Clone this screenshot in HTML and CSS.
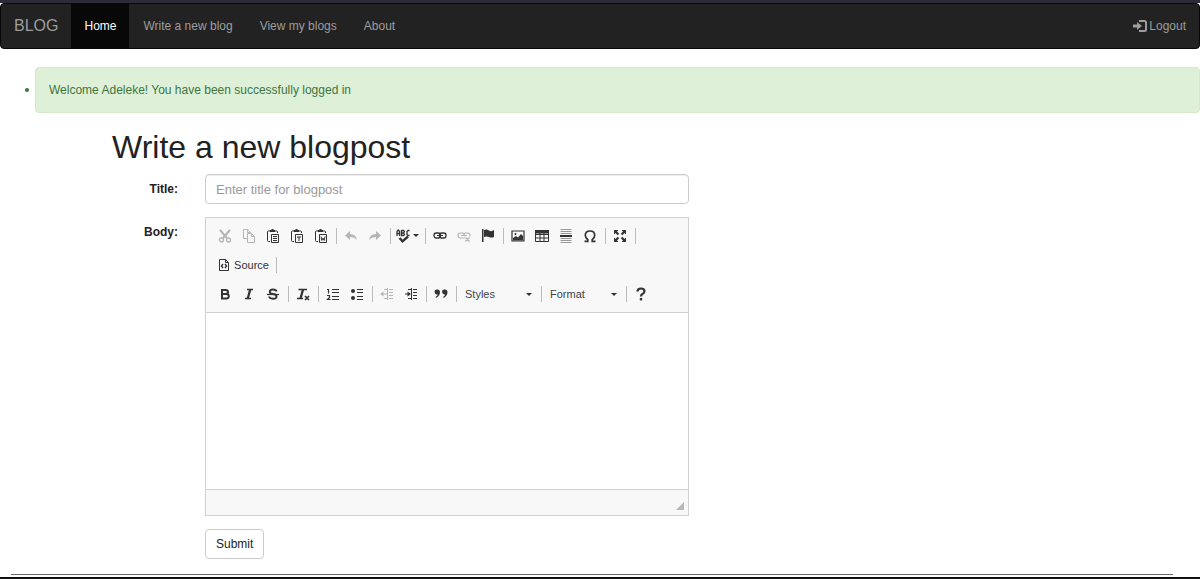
FILE: index.html
```html
<!DOCTYPE html>
<html lang="en">

<head>
  <meta charset="utf-8">
  <meta name="viewport" content="width=device-width, initial-scale=1">
  <title>Blog</title>
  <link rel="stylesheet" href="styles.css">
</head>

<body>
	<nav class="navbar">
		<a class="brand" href="#">BLOG</a>
		<ul class="nav">
			<li><a class="active" href="#">Home</a></li>
			<li><a href="#">Write a new blog</a></li>
			<li><a href="#">View my blogs</a></li>
			<li><a href="#">About</a></li>
		</ul>
		<a class="logout" href="#">
			<svg width="14" height="12" viewBox="0 0 14 12"><path d="M6 1h5.500q1.500 0 1.500 1.500v7q0 1.500-1.500 1.500H6" fill="none" stroke="currentColor" stroke-width="2"/><path d="M0 4.500h4V2l5 4-5 4V7.500H0z" fill="currentColor"/></svg>
			Logout
		</a>
	</nav>

	<ul class="messages">
		<li><div class="alert">Welcome Adeleke! You have been successfully logged in</div></li>
	</ul>

	<main class="container">
		<h1>Write a new blogpost</h1>
		<form class="post-form">
			<label for="title">Title:</label>
			<input type="text" id="title" class="form-control" placeholder="Enter title for blogpost">

			<label for="body">Body:</label>
			<div class="editor">
				<div class="toolbar">
					<div class="row">
						<button type="button" class="tool off" aria-label="Cut"><svg viewBox="0 0 14 14"><path d="M2 1l7 8M12 1L5 9" fill="none" stroke="currentColor" stroke-width="2"/><circle cx="3.500" cy="11" r="2" fill="none" stroke="currentColor" stroke-width="1.300"/><circle cx="10.500" cy="11" r="2" fill="none" stroke="currentColor" stroke-width="1.300"/></svg></button>
						<button type="button" class="tool off" aria-label="Copy"><svg viewBox="0 0 14 14"><path d="M5 9.500H1.500v-9h4l3 3V4M5.500.5v3h3M5.500 4.500h4l3 3v6h-7zM9.500 4.500v3h3" fill="none" stroke="currentColor"/></svg></button>
						<button type="button" class="tool" aria-label="Paste"><svg viewBox="0 0 14 14"><path d="M4 2H2.500Q1.500 2 1.500 3v8.500q0 1 1 1H4M9 2h1.500q1 0 1 1v1" fill="none" stroke="currentColor"/><path d="M4 1h1.500V0h2v1H9v2H4z" fill="currentColor"/><path d="M5.500 5.500h7v8h-7zM7 7.500h4M7 9.500h4M7 11.500h4" fill="none" stroke="currentColor"/></svg></button>
						<button type="button" class="tool" aria-label="Paste as plain text"><svg viewBox="0 0 14 14"><path d="M4 2H2.500Q1.500 2 1.500 3v8.500q0 1 1 1H4M9 2h1.500q1 0 1 1v1" fill="none" stroke="currentColor"/><path d="M4 1h1.500V0h2v1H9v2H4z" fill="currentColor"/><path d="M5.500 5.500h7v8h-7zM7 8h4M9 8v4" fill="none" stroke="currentColor"/></svg></button>
						<button type="button" class="tool" aria-label="Paste from Word"><svg viewBox="0 0 14 14"><path d="M4 2H2.500Q1.500 2 1.500 3v8.500q0 1 1 1H4M9 2h1.500q1 0 1 1v1" fill="none" stroke="currentColor"/><path d="M4 1h1.500V0h2v1H9v2H4z" fill="currentColor"/><path d="M5.500 5.500h7v8h-7zM7 7.500l.8 4L9 9l1.200 2.500.8-4" fill="none" stroke="currentColor"/></svg></button>
						<span class="sep"></span>
						<button type="button" class="tool off" aria-label="Undo"><svg viewBox="0 0 14 14"><path d="M6 2v3q6 0 7 6-2.500-3-7-3v3L1 6.500z" fill="currentColor"/></svg></button>
						<button type="button" class="tool off" aria-label="Redo"><svg viewBox="0 0 14 14"><path d="M8 2v3q-6 0-7 6 2.500-3 7-3v3l5-4.500z" fill="currentColor"/></svg></button>
						<span class="sep"></span>
						<button type="button" class="tool spell" aria-label="Spell check"><svg viewBox="0 0 14 14"><path d="M1 7V2.500L2.300 1l1.300 1.500V7M1 4.500h2.500M5.500 1v5.500h2l1-1-1-1.500 1-1.500-1-1h-2M5.500 4h2M13.500 1.500h-1.500L11 2.500v3l1 1h1.500" fill="none" stroke="currentColor" stroke-width="1.300"/><path d="M3.500 9l3 3.300L12 7.500" fill="none" stroke="currentColor" stroke-width="2.400"/></svg><span class="caret"></span></button>
						<span class="sep"></span>
						<button type="button" class="tool" aria-label="Link"><svg viewBox="0 0 14 14"><rect x="1" y="4" width="6.500" height="5" rx="2.200" fill="none" stroke="currentColor" stroke-width="1.300"/><rect x="6.500" y="4" width="6.500" height="5" rx="2.200" fill="none" stroke="currentColor" stroke-width="1.300"/><path d="M4 6.500h6" stroke="currentColor"/></svg></button>
						<button type="button" class="tool off" aria-label="Unlink"><svg viewBox="0 0 14 14"><path d="M8 9H3.500Q1 9 1 6.500T3.500 4h2Q7 4 7 6.500 7 4 8.500 4h2Q13 4 13 6.500v1M4 6.500h6M8.500 8.500l4 4M12.500 8.500l-4 4" fill="none" stroke="currentColor" stroke-width="1.200"/></svg></button>
						<button type="button" class="tool" aria-label="Anchor"><svg viewBox="0 0 14 14"><path d="M1 0h1.500v13H1z" fill="currentColor"/><path d="M3 1q2.500-1 5 .5T13 1v7q-2.500 1-5 0T3 8z" fill="currentColor"/></svg></button>
						<span class="sep"></span>
						<button type="button" class="tool" aria-label="Image"><svg viewBox="0 0 14 14"><path d="M1 2h12v10H1z" fill="none" stroke="currentColor" stroke-width="1.200"/><path d="M2 11.500V9l3-2 2 1.500L10 5l2 2v4.500z" fill="currentColor"/><circle cx="4.500" cy="5" r="1" fill="currentColor"/></svg></button>
						<button type="button" class="tool" aria-label="Table"><svg viewBox="0 0 14 14"><path d="M.5 1.500h13v11H.5zM.5 5.500h13M.5 9h13M5 4v8M9 4v8" fill="none" stroke="currentColor"/><path d="M0 1h14v3.500H0z" fill="currentColor"/></svg></button>
						<button type="button" class="tool" aria-label="Horizontal line"><svg viewBox="0 0 14 14"><path d="M1.500.5h11M1.500 2.500h11M1.500 4.500h11M1.500 9.500h11M1.500 11.500h11M1.500 13.500h11" stroke="#999"/><path d="M1 6h12v2H1z" fill="currentColor"/></svg></button>
						<button type="button" class="tool" aria-label="Special character"><svg viewBox="0 0 14 14"><path d="M1.500 12.300h3.300v-1.500Q2.300 9 2.300 6.300 2.300 2 7 2t4.700 4.300q0 2.700-2.500 4.500v1.500h3.300" fill="none" stroke="currentColor" stroke-width="1.700"/></svg></button>
						<span class="sep"></span>
						<button type="button" class="tool" aria-label="Maximize"><svg viewBox="0 0 14 14"><path d="M1 1h4.500L4 2.500 6.200 4.700 4.700 6.200 2.500 4 1 5.500zM13 1v4.500L11.500 4 9.300 6.200 7.800 4.700 10 2.500 8.500 1zM1 13V8.500L2.500 10l2.200-2.200 1.500 1.500L4 11.500 5.500 13zM13 13H8.500l1.500-1.500-2.200-2.200 1.500-1.500L11.500 10 13 8.500z" fill="currentColor"/></svg></button>
						<span class="sep"></span>
					</div>
					<div class="row">
						<button type="button" class="tool source"><svg viewBox="0 0 14 14"><path d="M2.500 1.500h6l3 3v8h-9zM8.500 1.500v3h3" fill="none" stroke="currentColor"/><path d="M6 6L4.500 8 6 10M8 6l1.500 2L8 10" fill="none" stroke="currentColor" stroke-width="1.400"/></svg>Source</button>
						<span class="sep"></span>
					</div>
					<div class="row">
						<button type="button" class="tool" aria-label="Bold"><svg viewBox="0 0 14 14"><path d="M4 3h3.500q2.500 0 2.500 2T7.500 7H4h4q2.800 0 2.800 2.300T8 11.500H4zM4 3v8.500" fill="none" stroke="currentColor" stroke-width="2"/></svg></button>
						<button type="button" class="tool" aria-label="Italic"><svg viewBox="0 0 14 14"><path d="M5 2.500h6M3 11.500h6" stroke="currentColor" stroke-width="1.500"/><path d="M8.200 2.500l-2.400 9" stroke="currentColor" stroke-width="2.300"/></svg></button>
						<button type="button" class="tool" aria-label="Strikethrough"><svg viewBox="0 0 14 14"><path d="M10.500 4.500Q10 2.500 7 2.500T3.800 4.700 7 7t3.500 2.500T7 11.700 3.200 9.500" fill="none" stroke="currentColor" stroke-width="2"/><path d="M1 7.500h12" stroke="currentColor" stroke-width="1.200"/></svg></button>
						<span class="sep"></span>
						<button type="button" class="tool" aria-label="Remove format"><svg viewBox="0 0 14 14"><path d="M2.500 2.500h8.500M1 11.500h6" stroke="currentColor" stroke-width="1.500"/><path d="M7 2.500l-2.500 9" stroke="currentColor" stroke-width="2.300"/><path d="M9 9l4 4M13 9l-4 4" stroke="currentColor" stroke-width="1.600"/></svg></button>
						<span class="sep"></span>
						<button type="button" class="tool" aria-label="Numbered list"><svg viewBox="0 0 14 14"><path d="M6 2.500h7M6 5.500h7M6 9.500h7M6 12.500h7M1 2.500h1.500v4M1 8.500h2.500v2L1.500 12.500h3" fill="none" stroke="currentColor" stroke-width="1.200"/></svg></button>
						<button type="button" class="tool" aria-label="Bulleted list"><svg viewBox="0 0 14 14"><circle cx="3" cy="4" r="2" fill="currentColor"/><circle cx="3" cy="11" r="2" fill="currentColor"/><path d="M7 2.500h6M7 5.500h6M7 9.500h6M7 12.500h6" stroke="currentColor" stroke-width="1.200"/></svg></button>
						<span class="sep"></span>
						<button type="button" class="tool off" aria-label="Outdent"><svg viewBox="0 0 14 14"><path d="M7.500 1v12M9 2.500h4M9 5.500h4M9 8.500h4M9 11.500h4M4 2.500h3M4 11.500h3M3 7h4" stroke="currentColor"/><path d="M0 7l3.500-2.500v5z" fill="currentColor"/></svg></button>
						<button type="button" class="tool" aria-label="Indent"><svg viewBox="0 0 14 14"><path d="M7.500 1v12M9 2.500h4M9 5.500h4M9 8.500h4M9 11.500h4M4 2.500h3M4 11.500h3M1 7h3" stroke="currentColor"/><path d="M7 7L3.500 4.500v5z" fill="currentColor"/></svg></button>
						<span class="sep"></span>
						<button type="button" class="tool" aria-label="Block quote"><svg viewBox="0 0 14 14"><path d="M3 2.500a2.500 2.500 0 0 1 3 2.500q0 4-4.200 6v-1.200Q3.800 8.500 3.700 7.200A2.400 2.400 0 1 1 3 2.500zM10.500 2.500a2.500 2.500 0 0 1 3 2.500q0 4-4.200 6v-1.200q2-1.300 1.900-2.600a2.400 2.400 0 1 1-.7-4.700z" fill="currentColor"/></svg></button>
						<span class="sep"></span>
						<span class="combo"><select aria-label="Styles"><option>Styles</option></select><span class="caret"></span></span>
						<span class="sep"></span>
						<span class="combo"><select aria-label="Format"><option>Format</option></select><span class="caret"></span></span>
						<span class="sep"></span>
						<button type="button" class="tool" aria-label="About the editor"><svg viewBox="0 0 14 14"><path d="M3.500 4.500Q3.500 1.500 7 1.500t3.500 2.700Q10.500 6 8.500 7 7 7.700 7 9.500" fill="none" stroke="currentColor" stroke-width="2.200"/><path d="M5.800 11h2.400v2.400H5.800z" fill="currentColor"/></svg></button>
					</div>
				</div>
				<textarea id="body"></textarea>
				<div class="editor-bottom"><span class="resizer"></span></div>
			</div>

			<button type="submit" class="btn">Submit</button>
		</form>
	</main>

	<footer class="footer"></footer>
</body>

</html>
```

FILE: styles.css
```css
* {
	box-sizing: border-box;
}

body {
	display: flex;
	flex-direction: column;
	min-height: 100vh;
	margin: 0;
	border-top: 3px solid #2b2a38;
	border-bottom: 2px solid #111;
	background: #fff;
	color: #222;
	font-family: "Liberation Sans", Arial, sans-serif;
	font-size: 12px;
	line-height: 18px;
}

ul {
	margin: 0;
	padding: 0;
	list-style: none;
}

button, input, textarea, select {
	font-family: inherit;
	font-size: inherit;
	color: inherit;
}

.navbar {
	display: flex;
	height: 46px;
	border: 1px solid #080808;
	border-radius: 4px;
	background: #222;
}

.navbar a {
	display: flex;
	align-items: center;
	height: 100%;
	padding: 0 13px;
	color: #9d9d9d;
	text-decoration: none;
}

.navbar .brand {
	font-size: 16px;
}

.nav {
	display: flex;
	gap: 1px;
}

.navbar .active {
	background: #080808;
	color: #fff;
}

.navbar .logout {
	gap: 2px;
	margin-left: auto;
}

.messages {
	margin-top: 18px;
	padding-left: 25px;
	color: #3c763d;
}

.messages li {
	display: flex;
	align-items: center;
	gap: 6px;
}

.messages li::before {
	content: "";
	width: 4px;
	height: 4px;
	border-radius: 50%;
	background: #3c763d;
}

.alert {
	flex: 1;
	padding: 13px;
	border: 1px solid #d6e9c6;
	border-radius: 4px;
	background: #dff0d8;
}

.container {
	width: 58%;
	padding-left: 112px;
}

h1 {
	margin: 17px 0 9px;
	font-size: 32px;
	font-weight: 500;
	line-height: 35px;
}

.post-form {
	display: grid;
	grid-template-columns: 66px 1fr;
	gap: 13px 27px;
	margin-right: 7px;
}

label {
	padding-top: 6px;
	font-weight: bold;
	text-align: right;
}

.form-control {
	height: 30px;
	padding: 0 10px;
	border: 1px solid #ccc;
	border-radius: 4px;
	box-shadow: inset 0 1px 1px rgba(0, 0, 0, 0.07);
	font-size: 13px;
}

.form-control::placeholder {
	color: #999;
}

.editor {
	border: 1px solid #d1d1d1;
}

.toolbar {
	padding: 3px 7px 4px;
	border-bottom: 1px solid #d1d1d1;
	background: #f8f8f8;
}

.row {
	display: flex;
	align-items: center;
	height: 29px;
}

.tool {
	display: flex;
	align-items: center;
	justify-content: center;
	width: 24px;
	height: 24px;
	padding: 0;
	border: 0;
	background: none;
	color: #333;
}

.tool svg {
	width: 14px;
	height: 14px;
}

.off {
	color: #b5b5b5;
}

.spell {
	gap: 3px;
	width: 29px;
}

.source {
	gap: 3px;
	width: 60px;
	font-size: 11px;
}

.sep {
	width: 1px;
	height: 16px;
	margin: 0 2px 0 3px;
	background: #bcbcbc;
}

.caret {
	border: 3px solid transparent;
	border-top-color: #333;
	border-bottom: 0;
}

.combo {
	position: relative;
	width: 79px;
}

.combo select {
	width: 100%;
	height: 24px;
	padding: 0 6px;
	border: 0;
	appearance: none;
	background: none;
	color: #444;
	font-size: 11px;
}

.combo .caret {
	position: absolute;
	top: 11px;
	right: 6px;
	pointer-events: none;
}

textarea {
	display: block;
	width: 100%;
	height: 176px;
	padding: 18px;
	border: 0;
	outline: 0;
	resize: none;
	background: #fff;
}

.editor-bottom {
	display: flex;
	align-items: flex-end;
	justify-content: flex-end;
	height: 26px;
	padding: 5px 4px;
	border-top: 1px solid #d1d1d1;
	background: #f8f8f8;
}

.resizer {
	border: 4px solid #b8b8b8;
	border-top-color: transparent;
	border-left-color: transparent;
}

.btn {
	grid-column: 2;
	justify-self: start;
	height: 30px;
	padding: 0 10px;
	border: 1px solid #ccc;
	border-radius: 4px;
	background: #fff;
}

.footer {
	height: 3px;
	margin: auto 27px 0 11px;
	border-top: 1px solid #666;
}
```
